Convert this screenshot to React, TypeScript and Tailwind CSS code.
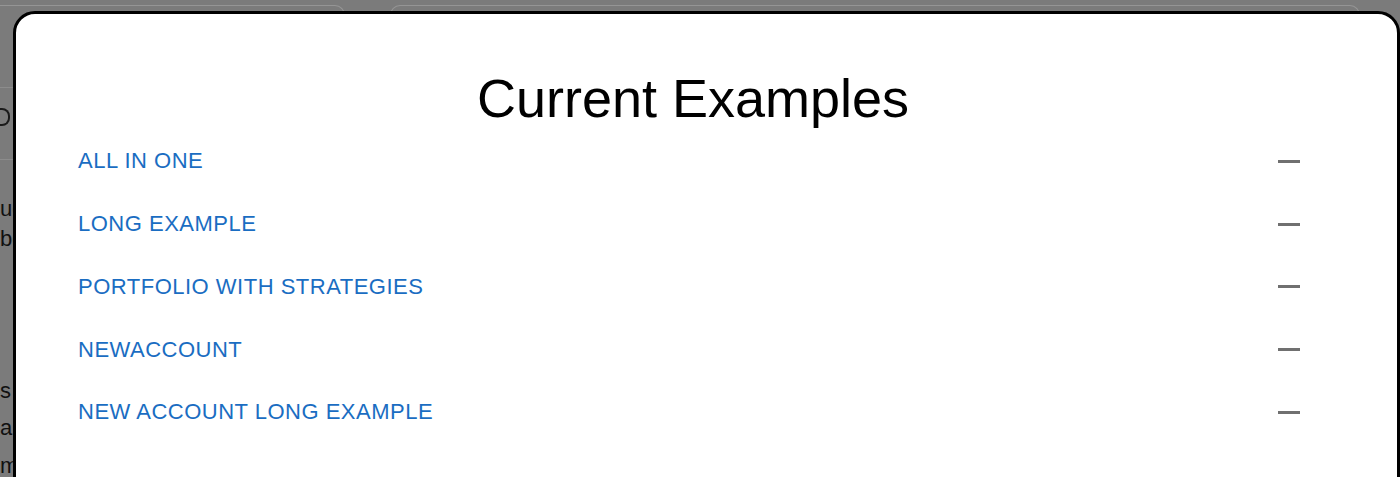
const examples = [
  "ALL IN ONE",
  "LONG EXAMPLE",
  "PORTFOLIO WITH STRATEGIES",
  "NEWACCOUNT",
  "NEW ACCOUNT LONG EXAMPLE",
];

function Backdrop() {
  return (
    <div className="flex flex-col">
      {/* Tabs of the page behind the dialog */}
      <div className="flex gap-[45px] pt-[5px]">
        <div className="h-[40px] w-[345px] rounded-tr-[10px] border-t border-r border-[#959595]" />
        <div className="h-[40px] w-[970px] rounded-t-[10px] border-t border-x border-[#959595]" />
      </div>

      {/* Left edge of the page, mostly hidden by the dialog */}
      <div className="flex w-[30px] flex-col whitespace-nowrap text-[22px] text-[#111]">
        <div className="mt-[42px] h-[73px] w-[13px] border-y border-[#8c8c8c] pt-[20px]">
          <div className="h-[18px] w-[10px] rounded-r-[8px] border-2 border-l-0 border-[#1a1a1a]" />
        </div>
        <div className="mt-[34px] leading-[30px]">ue</div>
        <div className="leading-[30px]">bo</div>
        <div className="mt-[118px] leading-[38px]">s</div>
        <div className="leading-[36px]">ar</div>
        <div className="leading-[40px]">m</div>
      </div>
    </div>
  );
}

function Minus() {
  return <span className="block h-[3px] w-[22px] bg-[#707070]" aria-hidden="true" />;
}

export default function App() {
  return (
    <div className="relative h-[477px] w-[1400px] overflow-hidden bg-[#7b7b7b] font-['Liberation_Sans',Arial,sans-serif]">
      <Backdrop />

      {/* Dialog */}
      <div className="absolute left-[13px] top-[11px] right-0 bottom-[-60px] rounded-[22px] border-[3px] border-black bg-white pt-[57px] pl-[62px] pr-[97px]">
        <h2 className="pl-[8px] text-center text-[54px] leading-none text-black">Current Examples</h2>

        <ul className="mt-[5px] flex flex-col">
          {examples.map((name) => (
            <li key={name} className="flex h-[62.75px] items-center justify-between">
              <span className="text-[22px] leading-none tracking-[0.5px] text-[#1a6dc2]">
                {name}
              </span>
              <Minus />
            </li>
          ))}
        </ul>
      </div>
    </div>
  );
}
